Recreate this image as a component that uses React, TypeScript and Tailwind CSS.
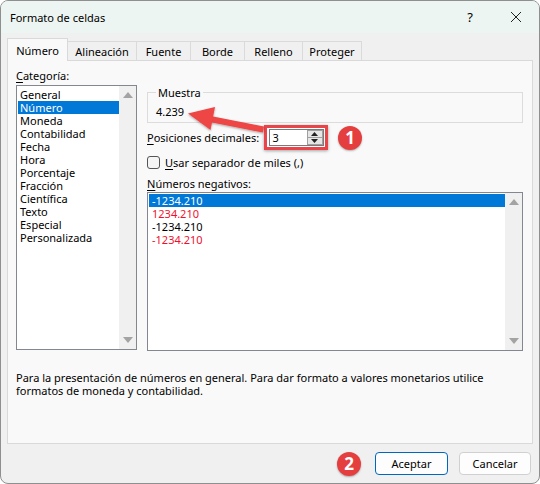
import React from "react";

const categories = [
  "General",
  "Número",
  "Moneda",
  "Contabilidad",
  "Fecha",
  "Hora",
  "Porcentaje",
  "Fracción",
  "Científica",
  "Texto",
  "Especial",
  "Personalizada",
];

const negatives = [
  { text: "-1234.210", red: false },
  { text: "1234.210", red: true },
  { text: "-1234.210", red: false },
  { text: "-1234.210", red: true },
];

const tabs = ["Número", "Alineación", "Fuente", "Borde", "Relleno", "Proteger"];
const tabWidths = ["w-[61px]", "w-[69px]", "w-[54px]", "w-[54px]", "w-[58px]", "w-[59px]"];

function ScrollTrack() {
  return (
    <div className="flex h-full w-[17px] flex-col items-center justify-between bg-[#f0f0f0] py-[6px]">
      <svg width="10" height="6" viewBox="0 0 10 6">
        <path d="M5 0 L10 6 L0 6 Z" fill="#a3a3a3" />
      </svg>
      <svg width="10" height="6" viewBox="0 0 10 6">
        <path d="M0 0 L10 0 L5 6 Z" fill="#a3a3a3" />
      </svg>
    </div>
  );
}

function Badge({ n }: { n: number }) {
  return (
    <div className="flex h-[24px] w-[24px] items-center justify-center rounded-full bg-[#e53e3e] text-[17px] font-bold leading-none text-white shadow-[0_1px_2px_rgba(0,0,0,0.3)]">
      {n}
    </div>
  );
}

export default function App() {
  return (
    <div
      className="relative flex h-[484px] w-[540px] flex-col overflow-hidden rounded-[8px] border border-[#8f8f8f] bg-[#f0f0f0] text-[11px] leading-[13px] text-black"
      style={{ fontFamily: '"Segoe UI", "Noto Sans", "Open Sans", sans-serif' }}
    >
      {/* Title bar */}
      <div className="flex h-[32px] shrink-0 items-center bg-[#ecf5f1] pl-[9px]">
        <span>Formato de celdas</span>
        <div className="ml-auto flex items-center">
          <span className="w-[46px] text-center text-[13px]">?</span>
          <div className="flex w-[46px] justify-center">
            <svg width="12" height="12" viewBox="0 0 12 12">
              <path d="M1 1 L11 11 M11 1 L1 11" stroke="#222" strokeWidth="1" />
            </svg>
          </div>
        </div>
      </div>

      {/* Tabs */}
      <div className="relative z-10 mt-[5px] flex h-[22px] items-end pl-[6px]">
        {tabs.map((t, i) =>
          i === 0 ? (
            <div
              key={t}
              className={`${tabWidths[i]} -mb-px flex h-[23px] items-center justify-center border border-b-0 border-[#d9d9d9] bg-[#f9f9f9]`}
            >
              {t}
            </div>
          ) : (
            <div
              key={t}
              className={`${tabWidths[i]} flex h-[19px] items-center justify-center border border-b-0 border-l-0 border-[#dadada] bg-[#f0f0f0]`}
            >
              {t}
            </div>
          ),
        )}
      </div>

      {/* Panel */}
      <div className="mx-[6px] h-[384px] shrink-0 border border-[#d9d9d9] bg-[#f9f9f9] pl-[8px] pt-[8px]">
        <div className="flex gap-[10px]">
          {/* Left column */}
          <div className="w-[121px]">
            <div>
              <span className="underline underline-offset-2">C</span>ategoría:
            </div>
            <div className="mt-[3px] flex h-[265px] border border-[#828790] bg-white">
              <div className="flex-1 pl-[1px] pt-[2px]">
                {categories.map((c) => (
                  <div
                    key={c}
                    className={`h-[13px] pl-[2px] ${c === "Número" ? "bg-[#0078d7] text-white" : ""}`}
                  >
                    {c}
                  </div>
                ))}
              </div>
              <ScrollTrack />
            </div>
          </div>

          {/* Right column */}
          <div className="w-[376px]">
            <fieldset className="mt-[17px] border border-[#dcdcdc] px-[8px] pb-[4px] pt-[6px]">
              <legend className="px-[2px]">Muestra</legend>
              <div>4.239</div>
            </fieldset>

            <div className="mt-[2px] flex h-[25px] items-center">
              <div className="w-[117px] whitespace-nowrap">
                <span className="underline underline-offset-2">P</span>osiciones decimales:
              </div>
              <div className="flex h-[25px] w-[64px] items-center justify-center border-[3px] border-[#e8444a] bg-white shadow-[0_1px_3px_rgba(0,0,0,0.35)]">
                <div className="flex h-[17px] w-[55px] border border-[#7a7a7a] bg-white">
                  <div className="flex-1 pl-[3px] leading-[15px]">3</div>
                  <div className="flex w-[16px] flex-col">
                    <div className="flex flex-1 items-center justify-center border border-[#a0a0a0] bg-[#e6e6e6]">
                      <svg width="7" height="4" viewBox="0 0 7 4">
                        <path d="M3.5 0 L7 4 L0 4 Z" fill="#222" />
                      </svg>
                    </div>
                    <div className="flex flex-1 items-center justify-center border border-t-0 border-[#a0a0a0] bg-[#e6e6e6]">
                      <svg width="7" height="4" viewBox="0 0 7 4">
                        <path d="M0 0 L7 0 L3.5 4 Z" fill="#222" />
                      </svg>
                    </div>
                  </div>
                </div>
              </div>
              <div className="ml-[10px]">
                <Badge n={1} />
              </div>
            </div>

            <div className="mt-[6px] flex h-[13px] items-center gap-[5px]">
              <div className="h-[13px] w-[13px] rounded-[3px] border border-[#555] bg-[#f5f5f5]" />
              <div>
                <span className="underline underline-offset-2">U</span>sar separador de miles (,)
              </div>
            </div>

            <div className="mt-[8px]">
              <span className="underline underline-offset-2">N</span>úmeros negativos:
            </div>
            <div className="mt-[2px] flex h-[159px] border border-[#828790] bg-white">
              <div className="flex-1 pl-[1px] pt-[1px]">
                {negatives.map((n, i) => (
                  <div
                    key={i}
                    className={`h-[13px] pl-[3px] ${
                      i === 0 ? "bg-[#0078d7] text-white" : n.red ? "text-[#f0102e]" : ""
                    }`}
                  >
                    {n.text}
                  </div>
                ))}
              </div>
              <ScrollTrack />
            </div>
          </div>
        </div>

        <div className="mt-[20px] w-[500px]">
          Para la presentación de números en general. Para dar formato a valores monetarios utilice
          formatos de moneda y contabilidad.
        </div>
      </div>

      {/* Footer */}
      <div className="flex flex-1 items-center justify-end gap-[11px] pr-[8px]">
        <div className="mr-[3px]">
          <Badge n={2} />
        </div>
        <button className="h-[23px] w-[73px] rounded-[4px] border border-[#0067c0] bg-[#fdfdfd]">
          Aceptar
        </button>
        <button className="h-[23px] w-[72px] rounded-[4px] border border-[#d0d0d0] bg-[#fdfdfd]">
          Cancelar
        </button>
      </div>

      {/* Annotation arrow */}
      <svg
        className="pointer-events-none absolute left-0 top-0"
        width="540"
        height="484"
        viewBox="0 0 540 484"
      >
        <defs>
          <filter id="sh" x="-20%" y="-50%" width="140%" height="200%">
            <feDropShadow dx="0" dy="1" stdDeviation="1" floodOpacity="0.35" />
          </filter>
        </defs>
        <g filter="url(#sh)" fill="#ee4444" stroke="none">
          <path d="M207 114.5 L263 125.5 L262 131.5 L206 120.5 Z" />
          <path d="M187 112.5 L214 106 L209.5 129 Z" />
        </g>
      </svg>
    </div>
  );
}
